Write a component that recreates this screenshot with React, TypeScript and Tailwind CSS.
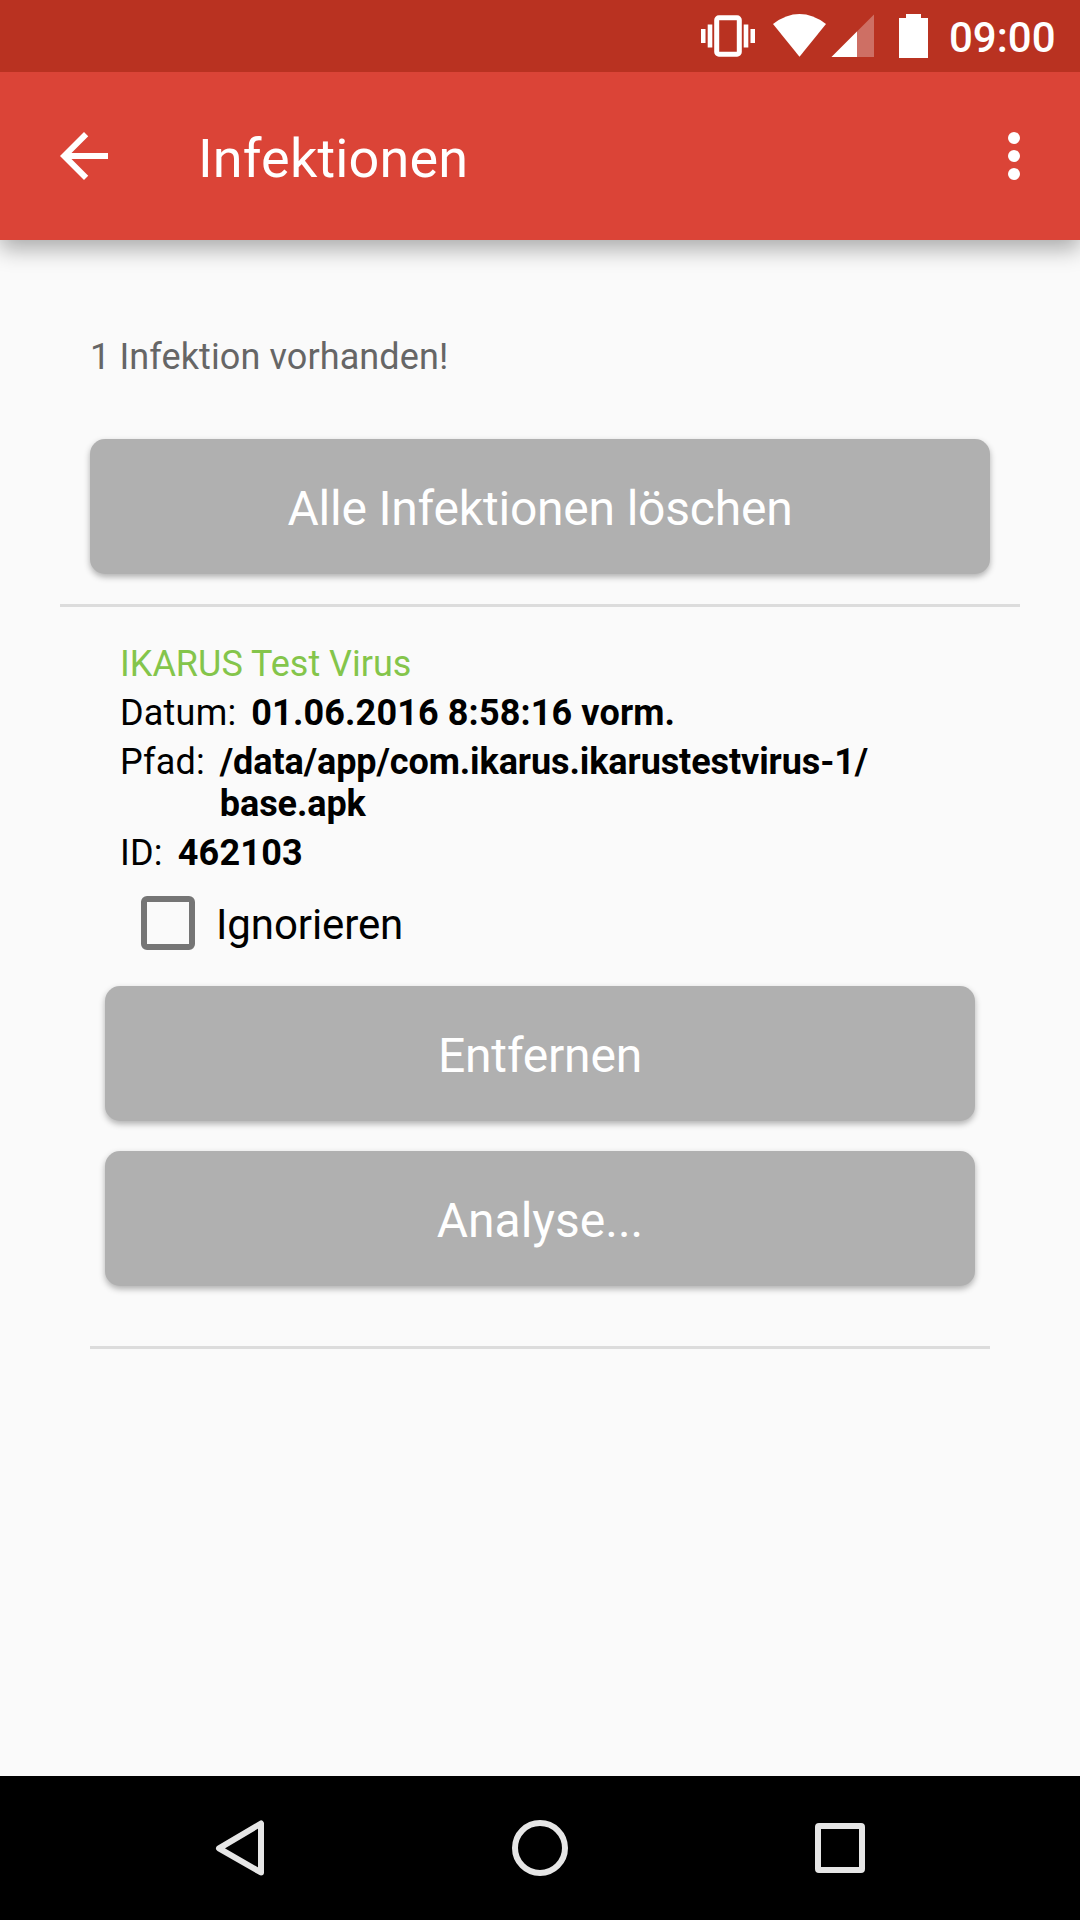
import type { ReactNode } from "react";

function StatusBar() {
  return (
    <div className="relative z-20 flex h-[72px] shrink-0 items-center justify-end bg-[#B93221] pr-6">
      <svg className="h-[72px] w-[260px]" viewBox="690 0 260 72" fill="#fff">
        <rect x="701" y="29" width="4.5" height="14" />
        <rect x="707.7" y="24.5" width="4.6" height="23" />
        <rect x="743.7" y="24.5" width="4.6" height="23" />
        <rect x="750.5" y="29" width="4.5" height="14" />
        <rect x="716.7" y="17.8" width="22.6" height="36.4" rx="2.2" fill="none" stroke="#fff" strokeWidth="5" />
        <path d="M773 24Q799.500 4.200 826 24L799.500 56.700Z" />
        <path d="M831.500 57L874 14.500V57Z" opacity="0.3" />
        <path d="M831.500 57L857 31.500V57Z" />
        <path d="M899 18H906V14H921V18H928V58H899Z" />
      </svg>
      <span className="-ml-px w-[107px] pt-[3px] text-[42px] leading-[48px] font-medium whitespace-nowrap text-white">09:00</span>
    </div>
  );
}

function AppBar() {
  return (
    <header className="z-10 flex h-[168px] shrink-0 items-center bg-[#DB4437] pr-[30px] pl-12 text-white shadow-[0_9px_21px_rgba(0,0,0,0.32)]">
      <svg className="size-[72px]" viewBox="0 0 24 24" fill="currentColor">
        <path d="M20 11H7.830l5.590-5.590L12 4l-8 8 8 8 1.410-1.410L7.830 13H20v-2z" />
      </svg>
      <h1 className="ml-[78px] flex-1 pt-[5px] text-[54px] leading-[64px] font-normal tracking-[0.15px]">Infektionen</h1>
      <svg className="size-[72px]" viewBox="0 0 24 24" fill="currentColor">
        <circle cx="12" cy="6" r="2" />
        <circle cx="12" cy="12" r="2" />
        <circle cx="12" cy="18" r="2" />
      </svg>
    </header>
  );
}

function ActionButton({ children }: { children: ReactNode }) {
  return (
    <button className="flex h-[135px] w-full items-center justify-center rounded-[15px] bg-[#B0B0B0] pt-[4px] text-[48px] leading-[56px] text-white shadow-[0_3px_6px_rgba(0,0,0,0.3)]">
      {children}
    </button>
  );
}

function Detail({ label, children }: { label: string; children: ReactNode }) {
  return (
    <div className="flex gap-[15px]">
      <span className="tracking-[0.2px]">{label}</span>
      <span className="font-bold">{children}</span>
    </div>
  );
}

function NavBar() {
  return (
    <nav className="flex h-36 shrink-0 items-center bg-black pl-[204px]">
      <svg className="size-[72px]" viewBox="0 0 72 72" fill="none" stroke="#E6E6E6" strokeWidth="6" strokeLinejoin="round">
        <path d="M57 11.500V60.500L15 36.300Z" />
      </svg>
      <svg className="ml-[228px] size-[72px]" viewBox="0 0 72 72" fill="none" stroke="#E6E6E6" strokeWidth="6">
        <circle cx="36" cy="36" r="25" />
      </svg>
      <svg className="ml-[228px] size-[72px]" viewBox="0 0 72 72" fill="none" stroke="#E6E6E6" strokeWidth="6" strokeLinejoin="round">
        <rect x="14" y="14" width="44" height="44" rx="1" />
      </svg>
    </nav>
  );
}

export default function App() {
  return (
    <div className="flex h-[1920px] w-[1080px] flex-col overflow-hidden bg-[#FAFAFA] font-[Roboto,sans-serif]">
      <StatusBar />
      <AppBar />
      <main className="flex flex-1 flex-col px-[60px] pt-24">
        <p className="px-[30px] text-[36px] leading-[42px] tracking-[0.11px] text-[#666666]">1 Infektion vorhanden!</p>
        <div className="mt-[61px] px-[30px]">
          <ActionButton>
            <span className="tracking-[-0.2px]">Alle Infektionen löschen</span>
          </ActionButton>
        </div>
        <hr className="mt-[30px] h-[3px] border-0 bg-[#DCDCDC]" />
        <section className="mt-9 flex flex-col gap-[7px] px-[60px] text-[36px] leading-[42px] text-black">
          <h2 className="text-[#84C54B]">IKARUS Test Virus</h2>
          <Detail label="Datum:">
            <span className="tracking-[0.13px]">01.06.2016 8:58:16 vorm.</span>
          </Detail>
          <Detail label="Pfad:">
            <span className="tracking-[-0.09px]">
              /data/app/com.ikarus.ikarustestvirus-1/
              <br />
              base.apk
            </span>
          </Detail>
          <Detail label="ID:">
            <span className="tracking-[0.2px]">462103</span>
          </Detail>
        </section>
        <label className="mt-[22px] flex h-[54px] items-center pl-[81px]">
          <span className="size-[54px] rounded-[6px] border-[6px] border-[#757575]" />
          <span className="ml-[21px] pt-[3px] text-[42px] leading-[49px] tracking-[-0.1px] text-black">Ignorieren</span>
        </label>
        <div className="mt-9 flex flex-col gap-[30px] px-[45px]">
          <ActionButton>
            <span className="tracking-[-0.2px]">Entfernen</span>
          </ActionButton>
          <ActionButton>Analyse...</ActionButton>
        </div>
        <hr className="mx-[30px] mt-[60px] h-[3px] border-0 bg-[#DCDCDC]" />
      </main>
      <NavBar />
    </div>
  );
}
